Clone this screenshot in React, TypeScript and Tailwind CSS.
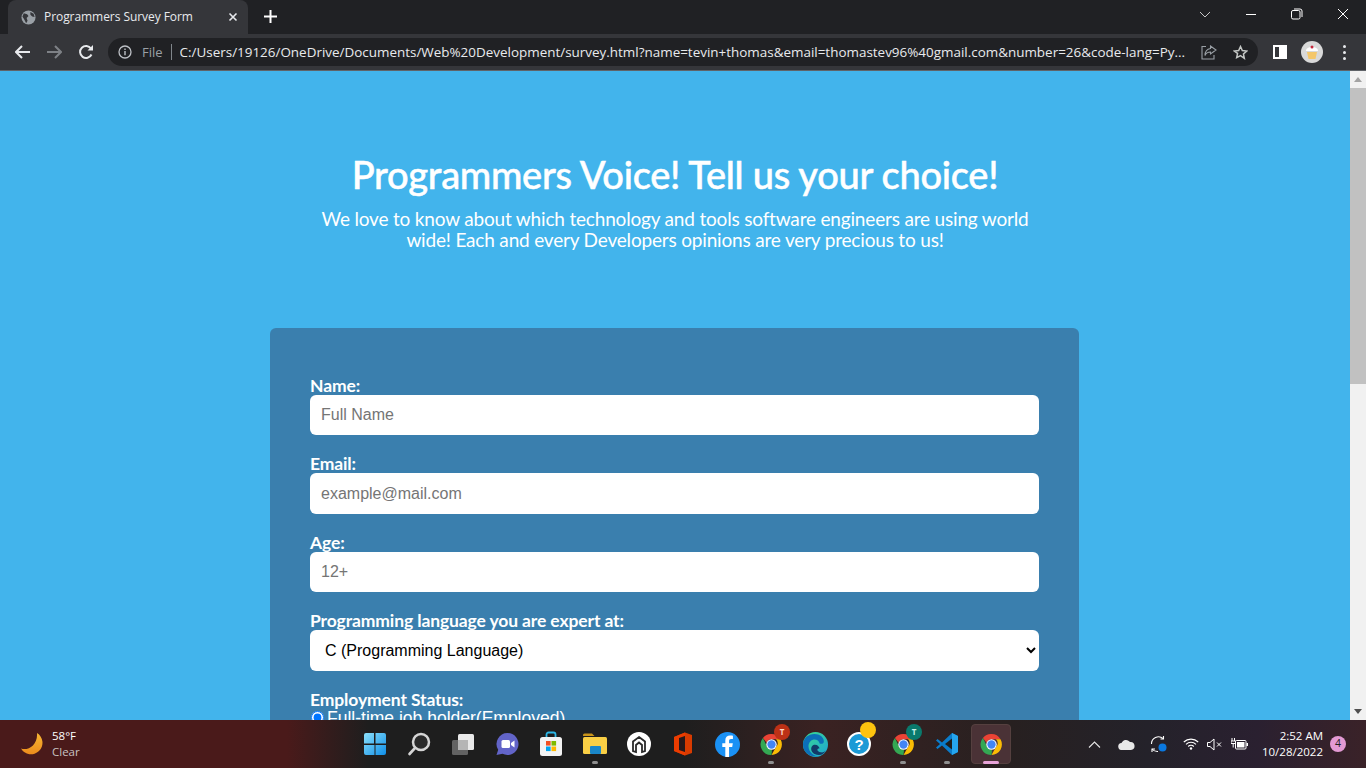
import React from "react";

const ui = "font-['Open_Sans','Noto_Sans',sans-serif]";
const head = "font-['Lato','Open_Sans',sans-serif]";

function ChromeIcon({ size = 24 }: { size?: number }) {
  return (
    <svg width={size} height={size} viewBox="0 0 48 48">
      <path d="M24 4a20 20 0 0 1 17.3 10H24a10 10 0 0 0-9.4 6.6L7.5 11.5A20 20 0 0 1 24 4z" fill="#ea4335" />
      <path d="M41.3 14A20 20 0 0 1 24 44l8.6-15a10 10 0 0 0 0-15z" fill="#fbbc04" />
      <path d="M24 44A20 20 0 0 1 7.5 11.5L16 29a10 10 0 0 0 9 5l-1 10z" fill="#34a853" />
      <circle cx="24" cy="24" r="10" fill="#fff" />
      <circle cx="24" cy="24" r="8" fill="#4285f4" />
    </svg>
  );
}

function Field({ label, children, mb = "mb-[20px]" }: { label: string; children: React.ReactNode; mb?: string }) {
  return (
    <div className={mb}>
      <label className={`block ${head} text-[17.5px] font-bold leading-[18px] tracking-[-0.12px] text-white`}>{label}</label>
      {children}
    </div>
  );
}

const inputCls =
  "block w-full h-[40.4px] rounded-[6px] bg-white px-[11px] font-['Liberation_Sans',sans-serif] text-[16px] text-black placeholder:text-[#757575] outline-none";

function Slot({ children, dot, active }: { children: React.ReactNode; dot?: boolean; active?: boolean }) {
  return (
    <div className={`relative flex h-[40px] w-[40px] mx-[2px] items-center justify-center rounded-[4px] ${active ? "bg-[#4a3236] border border-[#55403f]" : ""}`}>
      {children}
      {dot && <span className="absolute bottom-0 left-1/2 h-[3px] w-[6px] -translate-x-1/2 rounded-full bg-[#8f8f8f]" />}
      {active && <span className="absolute bottom-[-1px] left-1/2 h-[3px] w-[16px] -translate-x-1/2 rounded-full bg-[#e8a3d8]" />}
    </div>
  );
}

export default function App() {
  return (
    <div className="flex h-screen w-full flex-col overflow-hidden bg-[#42b4ec]">
      {/* tab strip */}
      <div className="flex h-[34px] shrink-0 items-end bg-[#202124]">
        <div className={`ml-[8px] flex h-[34px] w-[240px] items-center rounded-t-[8px] bg-[#35363a] ${ui}`}>
          <svg className="ml-[13px]" width="15" height="15" viewBox="0 0 16 16">
            <circle cx="8" cy="8" r="7.5" fill="#9aa0a6" />
            <path d="M3 3.5l3.5 1 1.5 2-2 2 1 3-1.5 2.5L3.5 10 1.5 7zM10 2l3.5 2 1 3.5-2.5-.5-2-2z" fill="#35363a" />
          </svg>
          <span className="ml-[8px] text-[12px] leading-none tracking-[-0.06px] whitespace-nowrap text-[#e8eaed]">Programmers Survey Form</span>
          <svg className="ml-auto mr-[10px]" width="10" height="10" viewBox="0 0 10 10"><path d="M1.5 1.5l7 7m0-7l-7 7" stroke="#e8eaed" strokeWidth="1.6" /></svg>
        </div>
        <svg className="ml-[16px] mb-[11px]" width="13" height="13" viewBox="0 0 13 13"><path d="M6.5 0v13M0 6.5h13" stroke="#fff" strokeWidth="2" /></svg>
        <div className="ml-auto flex h-[34px] items-center">
          <svg width="12" height="7" viewBox="0 0 12 7" className="mr-[35px] mb-[6px]"><path d="M1 1l5 5 5-5" stroke="#c7c7c7" fill="none" /></svg>
          <div className="mb-[6px] mr-[35px] h-[1px] w-[10px] bg-white" />
          <svg width="12" height="12" viewBox="0 0 12 12" className="mb-[6px] mr-[34px]"><rect x="0.5" y="2.5" width="8.5" height="8.5" rx="1.5" stroke="#fff" fill="none" /><path d="M3 1h6a2 2 0 0 1 2 2v6" stroke="#fff" fill="none" /></svg>
          <svg width="12" height="12" viewBox="0 0 12 12" className="mb-[6px] mr-[17px]"><path d="M1 1l10 10m0-10L1 11" stroke="#fff" /></svg>
        </div>
      </div>
      {/* toolbar */}
      <div className={`flex h-[37px] shrink-0 items-center border-b border-[#5f6368] bg-[#35363a] ${ui}`}>
        <svg className="ml-[15px]" width="15" height="14" viewBox="0 0 15 14"><path d="M7 1L1 7l6 6M1 7h14" stroke="#e8eaed" strokeWidth="2" fill="none" /></svg>
        <svg className="ml-[17px]" width="15" height="14" viewBox="0 0 15 14"><path d="M8 1l6 6-6 6M14 7H0" stroke="#7e8186" strokeWidth="2" fill="none" /></svg>
        <svg className="ml-[16px]" width="16" height="16" viewBox="0 0 16 16"><path d="M13.5 10.5A6 6 0 1 1 13 4.5" stroke="#e8eaed" strokeWidth="2" fill="none" /><path d="M15 1v5.5H9.5z" fill="#e8eaed" /></svg>
        <div className="ml-[14px] flex h-[28px] w-[1150px] items-center rounded-full bg-[#202124]">
          <svg className="ml-[10px]" width="14" height="14" viewBox="0 0 14 14"><circle cx="7" cy="7" r="6" stroke="#bdc1c6" strokeWidth="1.3" fill="none" /><path d="M7 6v4.2M7 3.6v1.3" stroke="#bdc1c6" strokeWidth="1.4" /></svg>
          <span className="ml-[10px] text-[13px] leading-none text-[#9aa0a6]">File</span>
          <span className="ml-[8px] h-[16px] w-[1px] bg-[#80868b]" />
          <span className="ml-[8px] w-[1008px] shrink-0 overflow-hidden text-[13.44px] leading-[18px] whitespace-nowrap text-[#e8eaed]">C:/Users/19126/OneDrive/Documents/Web%20Development/survey.html?name=tevin+thomas&amp;email=thomastev96%40gmail.com&amp;number=26&amp;code-lang=Py...</span>
          <svg className="ml-[13px]" width="16" height="15" viewBox="0 0 16 15"><path d="M5 1.5H1v12.5h12v-4" stroke="#9aa0a6" strokeWidth="1.1" fill="none" /><path d="M9.5 1l5.5 4-5.5 4V7C7 7 5 8 4 10.500c0-4 2.500-6.500 5.500-7z" stroke="#9aa0a6" strokeWidth="1.1" fill="none" /></svg>
          <svg className="ml-[16px]" width="15" height="15" viewBox="0 0 24 24"><path d="M12 2.500l2.900 6.400 7 .8-5.200 4.700 1.400 6.900L12 17l-6.100 3.300 1.400-6.900L2.100 9.700l7-.8z" stroke="#c4c7c5" strokeWidth="2.400" fill="none" /></svg>
        </div>
        <div className="ml-[15px] flex h-[14px] w-[14px] justify-end border-[2px] border-white"><div className="h-full w-[6px] bg-white" /></div>
        <div className="ml-[14px] flex h-[22px] w-[22px] items-center justify-center rounded-full bg-[#d9d9d9]">
          <svg width="14" height="15" viewBox="0 0 14 15"><path d="M1 6c0-3 3-4 6-4s6 1 6 4z" fill="#fff" /><circle cx="7" cy="2" r="1.500" fill="#c5283d" /><path d="M2 7h10l-1.500 7h-7z" fill="#f4c76a" /></svg>
        </div>
        <div className="ml-[20px] flex flex-col gap-[3px]">
          <span className="h-[3px] w-[3px] rounded-full bg-[#e8eaed]" />
          <span className="h-[3px] w-[3px] rounded-full bg-[#e8eaed]" />
          <span className="h-[3px] w-[3px] rounded-full bg-[#e8eaed]" />
        </div>
      </div>
      {/* page */}
      <div className="flex min-h-0 flex-1">
        <main className="min-w-0 flex-1 overflow-hidden bg-[#42b4ec]">
          <header className="pt-[80px] text-center text-white">
            <h1 className={`${head} text-[38px] font-medium leading-[46px] tracking-[-0.28px] [-webkit-text-stroke:0.5px_white]`}>Programmers Voice! Tell us your choice!</h1>
            <p className={`${head} mx-auto mt-[11px] w-[730px] text-[19px] font-normal leading-[21px] tracking-[-0.18px]`}>
              We love to know about which technology and tools software engineers are using world wide! Each and every Developers opinions are very precious to us!
            </p>
          </header>
          <section className="ml-[270px] mt-[78px] h-[500px] w-[809px] rounded-t-[6px] bg-[#3a7fae] px-[40px] pt-[47px]">
            <div className="pt-[2px]">
              <Field label="Name:"><input className={inputCls} placeholder="Full Name" /></Field>
              <Field label="Email:"><input className={inputCls} placeholder="example@mail.com" /></Field>
              <Field label="Age:"><input className={inputCls} placeholder="12+" /></Field>
              <Field label="Programming language you are expert at:">
                <select className={`${inputCls} appearance-auto px-[11px]`} defaultValue="c"><option value="c">C (Programming Language)</option></select>
              </Field>
              <Field label="Employment Status:" mb="mb-0">
                <label className="flex items-center font-['Liberation_Sans',sans-serif] text-[17.5px] leading-[18px] text-white">
                  <input type="radio" defaultChecked className="m-0 mr-[3px] ml-[1px] h-[13px] w-[13px]" />
                  Full-time job holder(Employed)
                </label>
              </Field>
            </div>
          </section>
        </main>
        <div className="relative flex w-[16px] shrink-0 flex-col items-center bg-[#f1f1f1]">
          <svg className="mt-[6px]" width="8" height="5" viewBox="0 0 8 5"><path d="M4 0l4 5H0z" fill="#a3a3a3" /></svg>
          <div className="mt-[6px] h-[296px] w-full bg-[#c1c1c1]" />
          <svg className="mt-auto mb-[6px]" width="8" height="5" viewBox="0 0 8 5"><path d="M0 0h8L4 5z" fill="#505050" /></svg>
        </div>
      </div>
      {/* taskbar */}
      <footer className={`flex h-[48px] shrink-0 items-center bg-[linear-gradient(90deg,#4a1a1a_0%,#4a1a1a_21%,#1e1e1e_27%,#1e1e1e_50%,#3a2222_60%,#272020_74%,#24222a_84%,#2a2030_92%,#3a2228_100%)] ${ui}`}>
        <div className="flex w-[353px] shrink-0 items-center">
          <svg className="ml-[20px]" width="25" height="25" viewBox="0 0 25 25">
            <defs><linearGradient id="moon" x1="0" y1="0" x2="0" y2="1"><stop offset="0" stopColor="#f7b733" /><stop offset="1" stopColor="#ec8b1c" /></linearGradient></defs>
            <path d="M17 1a11.500 11.500 0 1 1-16 15.500c7 2.500 17-3.500 16-15.500z" fill="url(#moon)" />
          </svg>
          <div className="ml-[7px] text-[11.500px] leading-[16px]">
            <div className="text-white">58°F</div>
            <div className="text-[#c9c2c2]">Clear</div>
          </div>
        </div>
        <div className="flex items-center">
          <Slot>
            <svg width="24" height="24" viewBox="0 0 24 24"><defs><linearGradient id="win" x1="0" y1="0" x2="1" y2="1"><stop offset="0" stopColor="#8ce0fb" /><stop offset="1" stopColor="#0f8fe8" /></linearGradient></defs><path d="M1 3a2 2 0 0 1 2-2h8v10.500H1zM12.500 1H21a2 2 0 0 1 2 2v8.500H12.500zM1 13h10.500v10H3a2 2 0 0 1-2-2zM12.500 13H23v8a2 2 0 0 1-2 2h-8.500z" fill="url(#win)" /></svg>
          </Slot>
          <Slot>
            <svg width="24" height="24" viewBox="0 0 24 24"><circle cx="14" cy="10" r="8" stroke="#d5d5d5" strokeWidth="2.500" fill="#2a2a2a" /><path d="M8 16l-5.500 6" stroke="#d5d5d5" strokeWidth="2.600" strokeLinecap="round" /></svg>
          </Slot>
          <Slot>
            <svg width="24" height="24" viewBox="0 0 24 24"><rect x="7" y="2" width="16" height="16" rx="1.500" fill="#e9e9e9" /><rect x="1" y="8" width="16" height="15" rx="1.500" fill="#6a6a6a" fillOpacity="0.9" /><rect x="7" y="8" width="10" height="10" fill="#b5b5b5" /></svg>
          </Slot>
          <Slot>
            <svg width="24" height="24" viewBox="0 0 24 24"><path d="M12.500 1a11 11 0 1 1-5 20.800L1.500 23l1.700-5.200A11 11 0 0 1 12.500 1z" fill="#6264c8" /><rect x="6.500" y="8" width="8.500" height="8" rx="1.500" fill="#fff" /><path d="M16 11l3.500-2.500v7L16 13z" fill="#fff" /></svg>
          </Slot>
          <Slot>
            <svg width="24" height="26" viewBox="0 0 24 26"><path d="M7.500 6V3.500a2 2 0 0 1 2-2h5a2 2 0 0 1 2 2V6" stroke="#2db8e8" strokeWidth="1.800" fill="none" /><rect x="1" y="6" width="22" height="19" rx="2.500" fill="#f3f3f3" /><rect x="7" y="10" width="4.600" height="4.600" fill="#f25022" /><rect x="12.500" y="10" width="4.600" height="4.600" fill="#7fba00" /><rect x="7" y="15.500" width="4.600" height="4.600" fill="#00a4ef" /><rect x="12.500" y="15.500" width="4.600" height="4.600" fill="#ffb900" /></svg>
          </Slot>
          <Slot dot>
            <svg width="24" height="22" viewBox="0 0 24 22"><path d="M0 2a1.500 1.500 0 0 1 1.500-1.500H9l2.500 2.500H0z" fill="#c9941a" /><rect x="0" y="4" width="24" height="17" rx="1.500" fill="#f9cf45" /><rect x="7" y="13" width="11" height="8" rx="1" fill="#1a87c9" /></svg>
          </Slot>
          <Slot>
            <svg width="24" height="24" viewBox="0 0 24 24"><circle cx="12" cy="12" r="12" fill="#fff" /><path d="M12 5l6 4.500v9.500l-3 1v-7l-3-2.500L9 13v7l-3-1V9.500z" fill="#fff" stroke="#2a2a2a" strokeWidth="1.800" /></svg>
          </Slot>
          <Slot>
            <svg width="20" height="24" viewBox="0 0 20 24"><path d="M1 5l11-4.500 7 2.500v18l-7 2.500L1 19z" fill="#d83b01" /><path d="M1 19l11 4.500V20L6 18V6l6-2V.5L1 5z" fill="#eb3c00" /><path d="M6 6l6-2v16l-6-2z" fill="#26181a" /></svg>
          </Slot>
          <Slot>
            <svg width="25" height="25" viewBox="0 0 24 24"><circle cx="12" cy="12" r="12" fill="#1a91f5" /><path d="M13.500 24v-9.500h3l.6-3.600h-3.600V8.700c0-1.100.5-1.900 2-1.900h1.700V3.600c-.6-.1-1.600-.2-2.700-.2-2.900 0-4.600 1.700-4.600 4.800v2.700H7v3.600h2.900V24z" fill="#fff" /></svg>
          </Slot>
          <Slot dot>
            <ChromeIcon size={25} />
            <span className="absolute left-[23px] top-[0px] flex h-[16px] w-[16px] items-center justify-center rounded-full bg-[#bd3116] text-[8px] font-bold text-[#ffd9c9]">T</span>
          </Slot>
          <Slot>
            <svg width="25" height="25" viewBox="0 0 24 24"><defs><linearGradient id="edge" x1="0" y1="0" x2="1" y2="1"><stop offset="0" stopColor="#3ddb8a" /><stop offset="1" stopColor="#1ba5d8" /></linearGradient></defs><circle cx="12" cy="12" r="12" fill="url(#edge)" /><path d="M0 12C0 6 5 2 11 2c5 0 9 3 9 7 0 2-2 3-4 2-1-4-6-5-9-2-3 3-2 9 2 12 2 1.500 4 2 6 2.300C7 24.500 0 20 0 12z" fill="#0c6fb8" /><path d="M11 21c-4-2-4-7-1-8.500 3-1 5 1 6 3-3 0-3 3 1 4 2 .5 4-.5 5-2-2 4-6 6-11 3.500z" fill="#123a68" /></svg>
          </Slot>
          <Slot>
            <svg width="24" height="24" viewBox="0 0 24 24"><circle cx="12" cy="12" r="11" fill="#1c9ad6" stroke="#fff" strokeWidth="2" /><text x="12" y="17.500" textAnchor="middle" fontSize="15" fontWeight="700" fill="#fff" fontFamily="Liberation Sans">?</text></svg>
            <span className="absolute left-[21px] top-[-2px] h-[16px] w-[16px] rounded-full bg-[#fdc30e]" />
          </Slot>
          <Slot dot>
            <ChromeIcon size={25} />
            <span className="absolute left-[23px] top-[0px] flex h-[16px] w-[16px] items-center justify-center rounded-full bg-[#0a7a6d] text-[8px] font-bold text-[#c8f0e8]">T</span>
          </Slot>
          <Slot dot>
            <svg width="24" height="24" viewBox="0 0 24 24"><path d="M17 1l6 3v16l-6 3-10-9.500L2.500 17 1 15.500 5 12 1 8.500 2.500 7 7 10.500z" fill="#0a7ccb" /><path d="M17 6.500L10 12l7 5.500z" fill="#1e1e1e" /><path d="M17 1l6 3v16l-6 3z" fill="#25a5ee" /></svg>
          </Slot>
          <Slot active><ChromeIcon size={25} /></Slot>
        </div>
        <div className="ml-auto flex items-center pr-[20px]">
          <svg width="13" height="7" viewBox="0 0 13 7"><path d="M1 6.500l5.500-5.500 5.500 5.500" stroke="#e5e5e5" strokeWidth="1.100" fill="none" /></svg>
          <svg className="ml-[17px]" width="17" height="11" viewBox="0 0 17 11"><path d="M4 11a3.500 3.500 0 0 1-.5-7A5 5 0 0 1 12 3a4 4 0 0 1 1 8z" fill="#e8e8e8" /></svg>
          <svg className="ml-[15px]" width="18" height="18" viewBox="0 0 18 18"><path d="M1.500 9A7 7 0 0 1 13 3.500M16 8" stroke="#fff" strokeWidth="1.100" fill="none" /><path d="M13.500 1v3h-3M2 17v-3h3" stroke="#fff" strokeWidth="1.100" fill="none" /><path d="M2 14a7 7 0 0 0 6 2.500" stroke="#fff" strokeWidth="1.100" fill="none" /><circle cx="12.500" cy="12.500" r="4" fill="#0a78e0" /></svg>
          <svg className="ml-[15px]" width="16" height="12" viewBox="0 0 16 12"><path d="M.8 4a10.500 10.500 0 0 1 14.400 0M3 6.300a7.300 7.300 0 0 1 10 0M5.200 8.500a4 4 0 0 1 5.600 0" stroke="#fff" strokeWidth="1.100" fill="none" /><circle cx="8" cy="10.500" r="1.200" fill="#fff" /></svg>
          <svg className="ml-[8px]" width="15" height="13" viewBox="0 0 15 13"><path d="M.5 4.500h2.500L7 1v11L3 8.500H.5z" stroke="#fff" fill="none" /><path d="M10 4.500l4 4m0-4l-4 4" stroke="#fff" /></svg>
          <svg className="ml-[9px]" width="17" height="12" viewBox="0 0 17 12"><rect x="4.500" y="2.500" width="10.500" height="8.500" rx="1" stroke="#fff" fill="none" /><rect x="6" y="4" width="7.500" height="5.500" fill="#fff" /><rect x="15.500" y="5" width="1.500" height="3" fill="#fff" /><path d="M1 0v3M3.500 0v3M0 3h4.500v2.500H0zM2.200 5.500v4" stroke="#fff" fill="none" /></svg>
          <div className="ml-[5px] w-[70px] text-right text-[11.500px] leading-[16px] whitespace-nowrap text-white">
            <div>2:52 AM</div>
            <div>10/28/2022</div>
          </div>
          <div className="ml-[7px] flex h-[16px] w-[16px] items-center justify-center rounded-full bg-[#e39ad4] text-[10.500px] text-[#222]">4</div>
        </div>
      </footer>
    </div>
  );
}
